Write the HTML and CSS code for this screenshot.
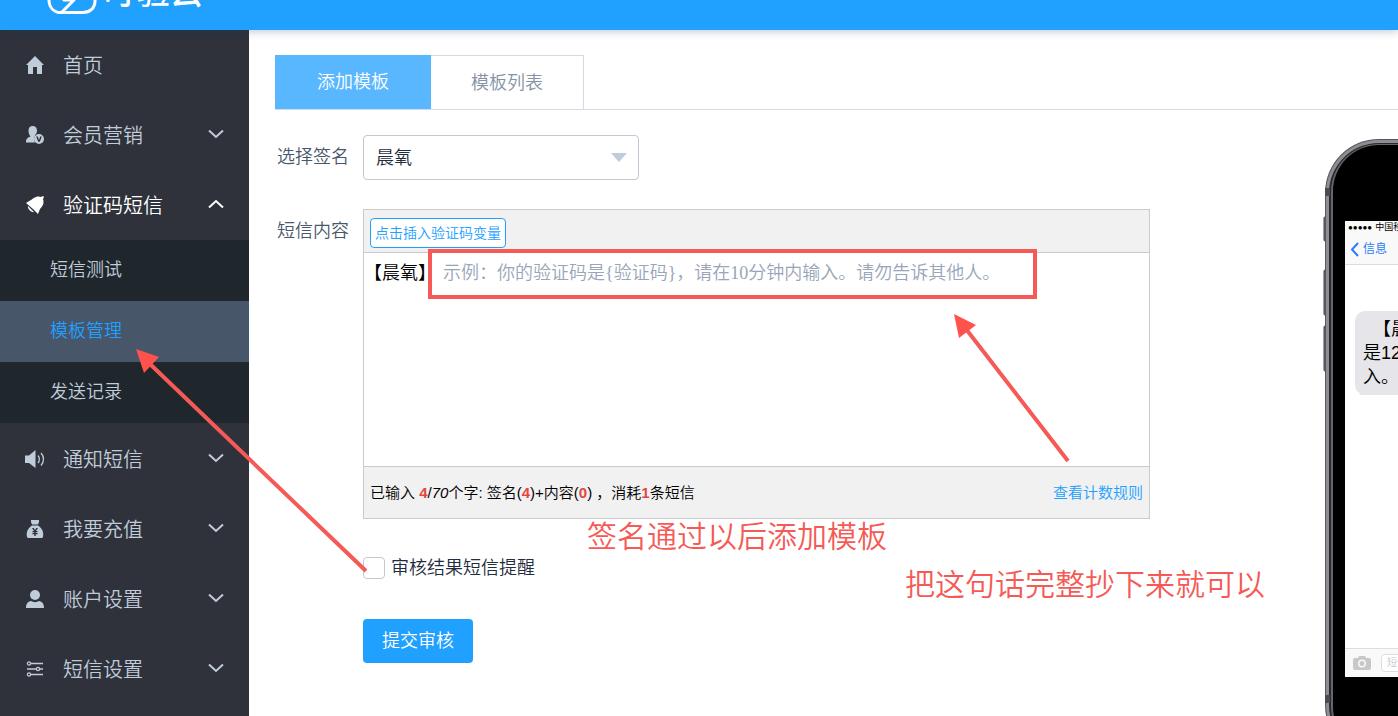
FILE: index.html
```html
<!DOCTYPE html>
<html lang="zh-CN">
<head>
<meta charset="utf-8">
<title>模板管理</title>
<link rel="stylesheet" href="styles.css">
</head>
<body>
<header class="topbar">
  <a class="brand" href="#" aria-label="叮验云">
    <svg class="brand-mark" viewBox="0 0 54 36" aria-hidden="true"><path d="M14 33.500A12 12 0 0 1 12 11C15 3 27 0 35 7C47 8 52 14 51 22C51 29 46 33.500 39 33.500H14M34 9L20 21H30L18 33" fill="none" stroke="#fff" stroke-width="3" stroke-linejoin="round"/></svg>
    <span class="brand-name">叮验云</span>
  </a>
</header>
<div class="layout">
  <nav class="sidebar">
    <a class="item" href="#">
      <svg class="icon" viewBox="0 0 20 20"><path d="M10 1L19 10H17V19H12V12H8V19H3V10H1Z"/></svg>
      <span class="name">首页</span>
    </a>
    <a class="item" href="#">
      <svg class="icon" viewBox="0 0 20 20"><path d="M7.500 1C10.500 1 12 3 12 5.500C12 7.500 11 9 10 10V11C8.500 13 8.500 15 10 17.500H1C1 14 2 13 5.500 11.500C4.300 10 3.500 8 3.500 5.500C3.500 3 5 1 7.500 1Z"/><path fill-rule="evenodd" d="M14 9A5 5 0 1 1 14 19A5 5 0 1 1 14 9ZM11.200 11.500L13.200 16.800H14.800L16.800 11.500H15.200L14 15L12.800 11.500Z"/></svg>
      <span class="name">会员营销</span>
      <svg class="chevron" viewBox="0 0 16 10"><path d="M1 1.500L8 8L15 1.500"/></svg>
    </a>
    <a class="item open" href="#">
      <svg class="icon" viewBox="0 0 20 20"><path d="M1 8C5 6 8 3 11 2C13 1.200 15 1.500 16 2L18 1L19 2L18 4C19.300 8 18 11 15 14L13 19L8 14ZM3 11L9 17C7 18 2 14 3 11Z"/></svg>
      <span class="name">验证码短信</span>
      <svg class="chevron" viewBox="0 0 16 10"><path d="M1 8.500L8 2L15 8.500"/></svg>
    </a>
    <div class="submenu">
      <a class="sub" href="#">短信测试</a>
      <a class="sub current" href="#">模板管理</a>
      <a class="sub" href="#">发送记录</a>
    </div>
    <a class="item" href="#">
      <svg class="icon" viewBox="0 0 20 20"><path d="M0 6.500H4L10.500 1V19L4 14H0Z"/><path class="line" d="M13 6.500C14.800 8.500 14.800 12 13 14M16 4C19.300 7.500 19.300 13 16 16.500"/></svg>
      <span class="name">通知短信</span>
      <svg class="chevron" viewBox="0 0 16 10"><path d="M1 1.500L8 8L15 1.500"/></svg>
    </a>
    <a class="item" href="#">
      <svg class="icon" viewBox="0 0 20 20"><path d="M6 1H14V3L13 5.500H7L6 3Z"/><path fill-rule="evenodd" d="M7 6.500H13C17 9 19 13 18 18L17 19H3L2 18C1 13 3 9 7 6.500ZM7 9L9 12H7.500V13.200H9.300V14H7.500V15.200H9.300V17H10.700V15.200H12.500V14H10.700V13.200H12.500V12H11L13 9H11.300L10 11L8.700 9Z"/></svg>
      <span class="name">我要充值</span>
      <svg class="chevron" viewBox="0 0 16 10"><path d="M1 1.500L8 8L15 1.500"/></svg>
    </a>
    <a class="item" href="#">
      <svg class="icon" viewBox="0 0 20 20"><circle cx="10" cy="6" r="5"/><path d="M1 19C1 14.500 3 12.500 6 12C8.500 13.500 11.500 13.500 14 12C17 12.500 19 14.500 19 19Z"/></svg>
      <span class="name">账户设置</span>
      <svg class="chevron" viewBox="0 0 16 10"><path d="M1 1.500L8 8L15 1.500"/></svg>
    </a>
    <a class="item" href="#">
      <svg class="icon" viewBox="0 0 20 20"><path class="line" d="M6 4.500H18M2 10H11M15 10H18M6 15.500H18"/><g class="line"><circle cx="4" cy="4.500" r="1.600"/><circle cx="13" cy="10" r="1.600"/><circle cx="4" cy="15.500" r="1.600"/></g></svg>
      <span class="name">短信设置</span>
      <svg class="chevron" viewBox="0 0 16 10"><path d="M1 1.500L8 8L15 1.500"/></svg>
    </a>
  </nav>

  <main class="main">
    <div class="tabs">
      <button class="tab active" type="button">添加模板</button>
      <button class="tab" type="button">模板列表</button>
    </div>
    <div class="content">
      <form class="form">
        <label class="label" for="sign">选择签名</label>
        <div class="select">
          <select id="sign"><option>晨氧</option></select>
          <svg viewBox="0 0 16 9" aria-hidden="true"><path d="M0 0H16L8 9Z"/></svg>
        </div>
        <label class="label top" for="body">短信内容</label>
        <div class="editor">
          <div class="toolbar"><button class="insert" type="button">点击插入验证码变量</button></div>
          <div class="entry">
            <span class="prefix">【晨氧】</span>
            <textarea id="body" placeholder="示例：你的验证码是{验证码}，请在10分钟内输入。请勿告诉其他人。"></textarea>
          </div>
          <div class="status">
            <span>已输入 <b>4</b>/<i>70</i>个字: 签名(<b>4</b>)+内容(<b>0</b>) ，消耗<b>1</b>条短信</span>
            <a href="#">查看计数规则</a>
          </div>
        </div>
        <div class="remind"><input type="checkbox" id="remind"><label for="remind">审核结果短信提醒</label></div>
        <button class="submit" type="submit">提交审核</button>
      </form>
      <aside class="phone">
        <svg class="frame" viewBox="0 0 400 760" aria-hidden="true">
          <g fill="#77797d" stroke="#3c3d40"><rect x="1" y="78" width="5" height="24" rx="1"/><rect x="1" y="131" width="5" height="45" rx="1"/><rect x="1" y="187" width="5" height="45" rx="1"/></g>
          <rect x="2" y="0" width="396" height="620" rx="54" fill="#56585d"/>
          <rect x="3" y="1" width="394" height="618" rx="53" fill="#8c8e93"/>
          <rect x="6" y="4" width="388" height="612" rx="50" fill="#292a2d"/>
          <rect x="8" y="5" width="384" height="610" rx="48" fill="#65666b"/>
          <rect x="10" y="6" width="380" height="608" rx="46" fill="#000"/>
          <path d="M2 49H7V57H2ZM2 556H7V564H2Z" fill="#4a4b50"/>
        </svg>
        <div class="screen">
          <div class="phone-status"><span class="dots">●●●●●</span><span>中国移动</span></div>
          <div class="phone-nav"><svg viewBox="0 0 9 15" aria-hidden="true"><path d="M8 1L2 7.500L8 14"/></svg><span>信息</span></div>
          <div class="thread"><p class="bubble">【晨氧】您的短信验证码<br>是123456，请在10分钟内输入。</p></div>
          <div class="compose">
            <svg viewBox="0 0 18 14" aria-hidden="true"><path fill-rule="evenodd" d="M5 2L6 0H12L13 2H16Q18 2 18 4V12Q18 14 16 14H2Q0 14 0 12V4Q0 2 2 2ZM9 3.500A4 4 0 1 0 9 11.500A4 4 0 1 0 9 3.500Z"/><circle cx="9" cy="7.500" r="2.500"/></svg>
            <span class="compose-box">短信</span>
          </div>
        </div>
      </aside>
    </div>
  </main>
</div>
<div class="notes">
  <svg class="arrows" width="1398" height="716" viewBox="0 0 1398 716" aria-hidden="true">
    <rect x="430" y="251" width="605" height="46" fill="none" stroke="#f55a56" stroke-width="4"/>
    <path d="M366 571L150 364M1068 461L966 329" fill="none" stroke="#f55a56" stroke-width="4"/>
    <path d="M136 349L159 357L144 373ZM954 314L976 325L959 338Z" fill="#ff524c"/>
  </svg>
  <p class="note note-sign">签名通过以后添加模板</p>
  <p class="note note-copy">把这句话完整抄下来就可以</p>
</div>
</body>
</html>
```
FILE: styles.css
```css
* { box-sizing: border-box; }
body {
  margin: 0;
  min-height: 100vh;
  display: flex;
  flex-direction: column;
  position: relative;
  overflow: hidden;
  background: #fff;
  color: #1f2d3d;
  font: 350 18px/24px "Liberation Sans", "Noto Sans CJK SC", sans-serif;
}
button, select, textarea { font: inherit; color: inherit; }
a { text-decoration: none; color: inherit; }
p { margin: 0; }

.topbar {
  height: 30px;
  flex: none;
  display: flex;
  align-items: flex-end;
  overflow: hidden;
  padding: 0 44px 15px;
  background: #20a0ff;
  box-shadow: 0 2px 8px rgba(32, 60, 90, .25);
  z-index: 1;
}
.brand { display: flex; align-items: flex-end; gap: 6px; color: #fff; }
.brand-mark { width: 54px; height: 36px; }
.brand-name { padding-bottom: 4px; font-size: 33px; line-height: 36px; font-weight: 500; }

.layout { flex: 1; display: flex; height: calc(100vh - 30px); }
.sidebar { width: 249px; flex: none; background: #2f323b; color: #c0ccda; overflow: hidden; }
.item {
  height: 70px;
  display: flex;
  align-items: center;
  gap: 18px;
  padding: 0 25px;
  font-size: 20px;
}
.item.open { color: #fff; }
.icon { width: 20px; height: 20px; fill: currentColor; }
.icon .line { fill: none; stroke: currentColor; stroke-width: 1.3; }
.name { flex: 1; padding-top: 2px; }
.chevron { width: 16px; height: 10px; margin-bottom: 3px; fill: none; stroke: currentColor; stroke-width: 2; }
.submenu { margin-bottom: 1px; background: #1f272c; }
.sub { display: flex; align-items: center; height: 61px; padding: 0 0 2px 50px; }
.sub.current { background: #475669; color: #20a0ff; }

.main { flex: 1; min-width: 0; padding: 25px 0 0 26px; overflow: hidden; }
.tabs { display: flex; border-bottom: 1px solid #d3dce6; }
.tab {
  height: 54px;
  padding: 0 40px;
  border: 1px solid #d3dce6;
  border-width: 1px 1px 0 0;
  background: #fff;
  color: #8492a6;
}
.tab.active { padding: 0 42px; border: 0; background: #58b7ff; color: #fff; }
.content { display: flex; gap: 173px; }
.form {
  flex: 1;
  min-width: 0;
  display: grid;
  grid-template-columns: 86px minmax(0, 1fr);
  padding-left: 2px;
  align-content: start;
  padding-top: 25px;
}
.label { padding-top: 10px; color: #48576a; }
.select { position: relative; width: 276px; height: 45px; margin-bottom: 29px; }
.select select {
  appearance: none;
  width: 100%;
  height: 100%;
  padding: 0 12px;
  border: 1px solid #c0c8d4;
  border-radius: 4px;
  background: #fff;
}
.select svg { position: absolute; right: 12px; top: 18px; width: 16px; height: 9px; fill: #c0ccda; }
.editor { border: 1px solid #c8cacc; }
.toolbar { height: 43px; padding: 8px 6px; background: #f1f1f1; border-bottom: 1px solid #c8cacc; }
.insert {
  display: block;
  height: 30px;
  padding: 0 4px;
  border: 1px solid #20a0ff;
  border-radius: 4px;
  background: #fff;
  color: #20a0ff;
  font-size: 14px;
}
.entry { display: flex; height: 213px; padding-top: 8px; }
.prefix { color: #000; }
.entry textarea {
  flex: 1;
  padding: 0 7px;
  border: 0;
  outline: 0;
  resize: none;
  background: none;
  font-family: "Liberation Serif", "Noto Sans CJK SC", serif;
}
.entry textarea::placeholder { color: #99a5b8; opacity: 1; }
.status {
  height: 52px;
  display: flex;
  align-items: center;
  justify-content: space-between;
  padding: 0 6px;
  border-top: 1px solid #c8cacc;
  background: #f1f1f1;
  color: #000;
  font-size: 15px;
}
.status b { color: #e64540; font-weight: 700; }
.status a { color: #20a0ff; }
.remind { grid-column: 2; display: flex; align-items: center; gap: 6px; height: 24px; margin-top: 37px; }
.remind input {
  appearance: none;
  width: 22px;
  height: 22px;
  margin: 0;
  border: 1px solid #c0c8d4;
  border-radius: 4px;
  background: #fff;
}
.submit {
  grid-column: 2;
  justify-self: start;
  height: 44px;
  margin-top: 39px;
  padding: 0 19px;
  border: 0;
  border-radius: 4px;
  background: #20a0ff;
  color: #fff;
}

.phone { flex: 0 0 75px; min-width: 0; position: relative; margin-top: 29px; }
.frame { position: absolute; left: 0; top: 0; width: 400px; height: 760px; }
.screen {
  position: relative;
  width: 356px;
  height: 456px;
  margin: 82px 0 0 22px;
  display: flex;
  flex-direction: column;
  background: #fff;
  color: #000;
}
.phone-status { display: flex; gap: 3px; height: 13px; padding-left: 3px; background: #f9f9f9; font-size: 9px; line-height: 13px; font-weight: 400; }
.dots { font-size: 8px; }
.phone-nav {
  height: 31px;
  display: flex;
  align-items: center;
  gap: 4px;
  padding-left: 5px;
  border-bottom: 1px solid #dcdcdc;
  background: #f9f9f9;
  color: #2a7dfa;
  font-size: 12px;
  font-weight: 400;
}
.phone-nav svg { width: 9px; height: 15px; fill: none; stroke: currentColor; stroke-width: 2; }
.thread { flex: 1; padding: 46px 0 0 10px; }
.bubble {
  position: relative;
  width: 244px;
  padding: 6px 8px;
  border-radius: 10px;
  background: #e5e5ea;
  text-indent: 10px;
}
.bubble::before {
  content: "";
  position: absolute;
  left: -4px;
  bottom: 0;
  border: 8px solid transparent;
  border-right: 8px solid #e5e5ea;
  border-bottom: 0;
}
.compose { height: 29px; display: flex; align-items: center; gap: 10px; padding-left: 8px; border-top: 1px solid #ddd; background: #f9f9f9; }
.compose svg { width: 18px; height: 14px; fill: #c8c8c8; }
.compose-box { width: 240px; height: 18px; padding-left: 5px; border: 1px solid #ddd; border-radius: 4px; background: #fff; color: #c8c8c8; font-size: 10px; line-height: 16px; }

.notes { position: absolute; inset: 0; pointer-events: none; z-index: 2; }
.arrows { position: absolute; left: 0; top: 0; }
.note { position: absolute; color: #f55a56; font-size: 30px; line-height: 40px; white-space: nowrap; }
.note-sign { left: 587px; top: 517px; }
.note-copy { left: 905px; top: 565px; }
```
